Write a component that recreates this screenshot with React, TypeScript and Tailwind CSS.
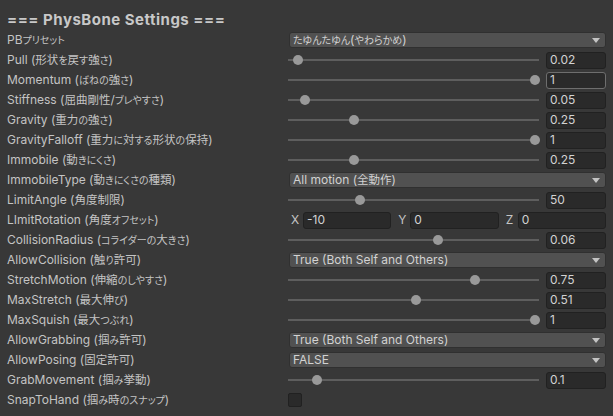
import React from "react";

type Row =
  | { label: string; kind: "dropdown"; value: string }
  | { label: string; kind: "slider"; value: string; frac: number; focused?: boolean }
  | { label: string; kind: "vector"; x: string; y: string; z: string }
  | { label: string; kind: "toggle"; checked: boolean };

const rows: Row[] = [
  { label: "PBプリセット", kind: "dropdown", value: "たゆんたゆん(やわらかめ)" },
  { label: "Pull (形状を戻す強さ)", kind: "slider", value: "0.02", frac: 0.02 },
  { label: "Momentum (ばねの強さ)", kind: "slider", value: "1", frac: 1, focused: true },
  { label: "Stiffness (屈曲剛性/ブレやすさ)", kind: "slider", value: "0.05", frac: 0.05 },
  { label: "Gravity (重力の強さ)", kind: "slider", value: "0.25", frac: 0.25 },
  { label: "GravityFalloff (重力に対する形状の保持)", kind: "slider", value: "1", frac: 1 },
  { label: "Immobile (動きにくさ)", kind: "slider", value: "0.25", frac: 0.25 },
  { label: "ImmobileType (動きにくさの種類)", kind: "dropdown", value: "All motion (全動作)" },
  { label: "LimitAngle (角度制限)", kind: "slider", value: "50", frac: 50 / 180 },
  { label: "LImitRotation (角度オフセット)", kind: "vector", x: "-10", y: "0", z: "0" },
  { label: "CollisionRadius (コライダーの大きさ)", kind: "slider", value: "0.06", frac: 0.6 },
  { label: "AllowCollision (触り許可)", kind: "dropdown", value: "True (Both Self and Others)" },
  { label: "StretchMotion (伸縮のしやすさ)", kind: "slider", value: "0.75", frac: 0.75 },
  { label: "MaxStretch (最大伸び)", kind: "slider", value: "0.51", frac: 0.51 },
  { label: "MaxSquish (最大つぶれ)", kind: "slider", value: "1", frac: 1 },
  { label: "AllowGrabbing (掴み許可)", kind: "dropdown", value: "True (Both Self and Others)" },
  { label: "AllowPosing (固定許可)", kind: "dropdown", value: "FALSE" },
  { label: "GrabMovement (掴み挙動)", kind: "slider", value: "0.1", frac: 0.1 },
  { label: "SnapToHand (掴み時のスナップ)", kind: "toggle", checked: false },
];

// The editor's Japanese fallback draws kana smaller than kanji
const kana = /^[\u3040-\u30ff]+$/;
const jp = /([\u3040-\u30ff]+|[\u3000-\u303f\u4e00-\u9fff\uff00-\uffef]+)/;

function Text({ children }: { children: string }) {
  return (
    <>
      {children.split(jp).map((part, i) => {
        if (!part) return null;
        if (kana.test(part))
          return (
            <span key={i} className="text-[10px] [font-feature-settings:'palt']">
              {part}
            </span>
          );
        if (jp.test(part))
          return (
            <span key={i} className="text-[11.5px]">
              {part}
            </span>
          );
        return <React.Fragment key={i}>{part}</React.Fragment>;
      })}
    </>
  );
}

function Dropdown({ value }: { value: string }) {
  return (
    <div className="ml-px flex h-4 flex-1 items-center justify-between rounded-[3px] border border-[#303030] bg-[#515151] pl-[3px] pr-[5px] text-[#d2d2d2]">
      <span className="whitespace-nowrap leading-none">
        <Text>{value}</Text>
      </span>
      <svg width="8" height="5" viewBox="0 0 8 5">
        <path d="M0 0 H8 L4 5 Z" fill="#c4c4c4" />
      </svg>
    </div>
  );
}

function Field({ value, focused, className = "" }: { value: string; focused?: boolean; className?: string }) {
  return (
    <div
      className={`flex h-[17px] items-center rounded-[3px] border bg-[#2a2a2a] pl-[3px] leading-none text-[#d2d2d2] ${
        focused ? "border-[#6e6e6e]" : "border-[#212121]"
      } ${className}`}
    >
      {value}
    </div>
  );
}

function Slider({ value, frac, focused }: { value: string; frac: number; focused?: boolean }) {
  return (
    <div className="flex flex-1 items-center">
      <div className="relative flex h-[10px] flex-1 items-center">
        <div className="h-[2px] w-full bg-[#5e5e5e]" />
        <div
          className="absolute top-0 h-[10px] w-[10px] rounded-full bg-[#999999]"
          style={{ left: `${frac * 242}px` }}
        />
      </div>
      <Field value={value} focused={focused} className="ml-[7px] w-[60px]" />
    </div>
  );
}

function Vector({ x, y, z }: { x: string; y: string; z: string }) {
  const parts = [
    ["X", x],
    ["Y", y],
    ["Z", z],
  ];
  return (
    <div className="ml-px flex flex-1 gap-[5px]">
      {parts.map(([k, v]) => (
        <div key={k} className="flex flex-1 items-center">
          <span className="w-[14px] pl-[2px] text-[#c4c4c4]">{k}</span>
          <Field value={v} className="flex-1" />
        </div>
      ))}
    </div>
  );
}

export default function App() {
  return (
    <div
      className="min-h-[416px] w-full bg-[#383838] pt-[10px] text-[12px] text-[#c4c4c4]"
      style={{ fontFamily: 'Inter, "Noto Sans CJK JP", sans-serif' }}
    >
      <div className="flex h-5 items-center pl-[7px] text-[15px] font-bold tracking-[0.5px] text-[#c8c8c8]">
        === PhysBone Settings ===
      </div>
      {rows.map((r) => (
        <div key={r.label} className="flex h-5 items-center pl-[7px] pr-[7px]">
          <div className="w-[281px] shrink-0 whitespace-nowrap">
            <Text>{r.label}</Text>
          </div>
          <div className="flex flex-1 items-center">
            {r.kind === "dropdown" && <Dropdown value={r.value} />}
            {r.kind === "slider" && <Slider value={r.value} frac={r.frac} focused={r.focused} />}
            {r.kind === "vector" && <Vector x={r.x} y={r.y} z={r.z} />}
            {r.kind === "toggle" && (
              <div className="h-[14px] w-[14px] rounded-[2px] border border-[#212121] bg-[#2a2a2a]" />
            )}
          </div>
        </div>
      ))}
    </div>
  );
}
